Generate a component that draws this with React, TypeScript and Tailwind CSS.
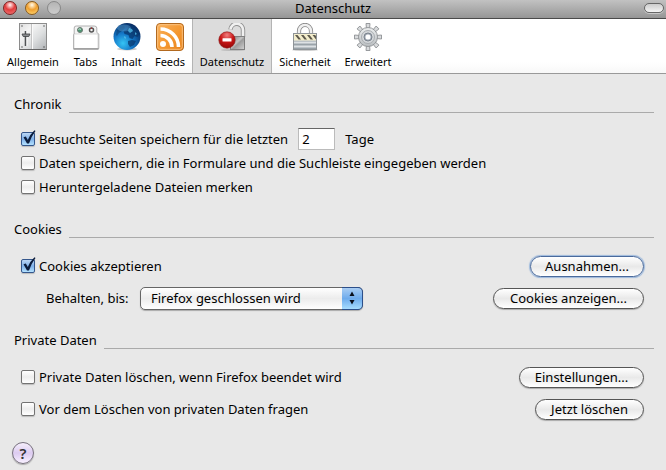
import { useState, type ReactNode } from "react"
import clsx from "clsx"

const AllgemeinIcon = () => (
  <svg width="28" height="28" viewBox="0 0 28 28">
    <defs>
      <linearGradient id="panel" x1="0" y1="0" x2="1" y2="1">
        <stop offset="0" stopColor="#dcdcdc" />
        <stop offset="0.3" stopColor="#f4f4f4" />
        <stop offset="0.6" stopColor="#dddfe0" />
        <stop offset="1" stopColor="#b0b3b6" />
      </linearGradient>
    </defs>
    <rect x="0.5" y="0.5" width="27" height="26" fill="url(#panel)" stroke="#8c8c8c" />
    <path d="M0.5 26.500h27" stroke="#666" />
    <path d="M12.500 1v25" stroke="#c4c4c4" />
    <path d="M13.500 1v25" stroke="#fafafa" />
    <path d="M6.500 8v15" stroke="#4f5254" strokeWidth="1.600" />
    <path d="M8 8v15" stroke="#fff" strokeWidth="0.800" />
    <path d="M3 11h8l-1.200 2.500H4.200z" fill="#8a8d90" stroke="#3e4042" strokeWidth="0.800" />
    <g fill="#444">
      <circle cx="3" cy="3" r="0.700" />
      <circle cx="25" cy="3" r="0.700" />
      <circle cx="3" cy="24" r="0.700" />
      <circle cx="25" cy="24" r="0.700" />
    </g>
  </svg>
)

const TabsIcon = () => (
  <svg width="28" height="28" viewBox="0 0 28 28">
    <path d="M1.500 25.500V12q0-1 .7-1V5q0-2 2-2h18q2.600 0 2.600 2v4.500l2 1.500v14.500z" fill="#f3f3f3" stroke="#b0b0b0" />
    <rect x="2" y="11" width="24" height="14.500" fill="#fff" stroke="#c4c4c4" strokeWidth="0.600" />
    <path d="M1.500 26h25" stroke="#909090" strokeWidth="1.400" />
    <circle cx="8" cy="7" r="2.500" fill="#4d9674" stroke="#6c7a72" />
    <path d="M6.500 6.500q1.500-1.500 2.500 0" stroke="#d6efe1" fill="none" />
    <circle cx="19.500" cy="7" r="2" fill="#f4f4f4" stroke="#555" strokeWidth="1.500" />
    <path d="M19.500 4.500v1.500" stroke="#b03030" />
  </svg>
)

const InhaltIcon = () => (
  <svg width="28" height="28" viewBox="0 0 28 28">
    <defs>
      <radialGradient id="ocean" cx="0.35" cy="0.75" r="0.8">
        <stop offset="0" stopColor="#35c4f4" />
        <stop offset="0.45" stopColor="#1478c8" />
        <stop offset="1" stopColor="#06285e" />
      </radialGradient>
    </defs>
    <ellipse cx="14" cy="26" rx="10" ry="1.500" fill="#c9c9c9" />
    <circle cx="14" cy="13.500" r="13.500" fill="url(#ocean)" />
    <path d="M15 3l4-1 5 4 2.500 5-2 3-3-1-2 3-3-1-1-3-4-1-1-3 3-1 2-2zM15 18l4-1 4 1-2 4-4 2-2-3z" fill="#0a376c" opacity="0.75" />
    <path d="M4 7l3-3 4-1 1 2-3 3-3 2-2 3-1-1z" fill="#0a376c" opacity="0.5" />
    <path d="M16 5l3 1 1 2-3 2-2-2zM22 9l2 2-2 1zM11 13l2 1 0 2-2-1z" fill="#4fb9e6" opacity="0.8" />
    <ellipse cx="11" cy="5" rx="7" ry="3.500" fill="#7fc4ee" opacity="0.3" />
  </svg>
)

const FeedsIcon = () => (
  <svg width="28" height="28" viewBox="0 0 28 28">
    <defs>
      <linearGradient id="feed" x1="0" y1="0" x2="1" y2="1">
        <stop offset="0" stopColor="#f8b260" />
        <stop offset="0.5" stopColor="#f59a34" />
        <stop offset="1" stopColor="#e8821a" />
      </linearGradient>
    </defs>
    <rect x="0.500" y="0.500" width="27" height="27" rx="3.500" fill="url(#feed)" stroke="#b2691f" />
    <rect x="1.700" y="1.700" width="24.600" height="24.600" rx="2.500" fill="none" stroke="#fbc98e" strokeWidth="0.800" />
    <circle cx="7" cy="21" r="3" fill="#fff" />
    <path d="M4.500 12.500a11.500 11.500 0 0 1 11.500 11.500M4.500 6a18 18 0 0 1 18 18" fill="none" stroke="#fff" strokeWidth="3.600" />
  </svg>
)

const DatenschutzIcon = () => (
  <svg width="28" height="28" viewBox="0 0 28 28">
    <defs>
      <linearGradient id="lock" x1="0" y1="0" x2="1" y2="1">
        <stop offset="0" stopColor="#777" />
        <stop offset="0.45" stopColor="#c4c4c4" />
        <stop offset="0.55" stopColor="#9c9c9c" />
        <stop offset="1" stopColor="#d4d4d4" />
      </linearGradient>
      <radialGradient id="stop" cx="0.5" cy="0.2" r="0.8">
        <stop offset="0" stopColor="#f08080" />
        <stop offset="0.5" stopColor="#cb1818" />
        <stop offset="1" stopColor="#960808" />
      </radialGradient>
    </defs>
    <ellipse cx="15" cy="27" rx="12" ry="1" fill="#bdbdbd" />
    <path d="M25 14V7.500a6 6 0 0 0-12.500-1" fill="none" stroke="#8f8f8f" strokeWidth="4.400" />
    <path d="M25 14V7.500a6 6 0 0 0-12.500-1" fill="none" stroke="#f0f0f0" strokeWidth="2.600" />
    <rect x="12.500" y="13.500" width="14" height="13" fill="url(#lock)" stroke="#808080" />
    <circle cx="9" cy="17" r="8.200" fill="url(#stop)" stroke="#8b1717" strokeWidth="0.600" />
    <rect x="4.500" y="15.300" width="9" height="3.200" rx="0.500" fill="#fff" />
  </svg>
)

const SicherheitIcon = () => (
  <svg width="28" height="28" viewBox="0 0 28 28">
    <ellipse cx="14" cy="27" rx="13" ry="0.900" fill="#cfcfcf" />
    <path d="M8 11V8a6 6 0 0 1 12 0v3" fill="none" stroke="#858585" strokeWidth="4.200" />
    <path d="M8 11V8a6 6 0 0 1 12 0v3" fill="none" stroke="#f0f0f0" strokeWidth="2.600" />
    <rect x="2.500" y="10.500" width="23" height="16" fill="#bcc3c8" stroke="#8f9498" />
    <path d="M3 19.500h22M3 23.500h22" stroke="#dde1e4" />
    <path d="M3 21.500h22" stroke="#9aa3a9" />
    <path d="M3 25.500h22" stroke="#9aa3a9" />
    <rect x="3" y="11" width="22" height="6.500" fill="#f3edcb" />
    <path d="M4 12h2.500l3.500 4.500H7.500zM10 12h2.500l3.500 4.500h-2.500zM16 12h2.500l3.500 4.500h-2.500zM21.500 12H24l1 1v3.500z" fill="#5d594c" />
  </svg>
)

const ErweitertIcon = () => (
  <svg width="28" height="28" viewBox="0 0 28 28">
    <defs>
      <linearGradient id="gear" x1="0" y1="0" x2="0" y2="1">
        <stop offset="0" stopColor="#eceeef" />
        <stop offset="1" stopColor="#b9bdc0" />
      </linearGradient>
    </defs>
    <g fill="#d9dbdd" stroke="#8f9295" strokeWidth="0.900">
      {[0, 45, 90, 135, 180, 225, 270, 315].map((angle) => (
        <path key={angle} d="M12.500 6L12 .500h4L15.500 6z" transform={`rotate(${angle} 14 14)`} />
      ))}
      <circle cx="14" cy="14" r="9.500" fill="url(#gear)" />
    </g>
    <circle cx="14" cy="14" r="6.500" fill="#d4d7da" stroke="#aaaeb2" />
    <circle cx="14" cy="14" r="4" fill="#a5adb8" stroke="#7b838d" />
    <circle cx="14" cy="14" r="2.500" fill="#fff" />
  </svg>
)

const tabs = [
  { label: "Allgemein", width: "w-[66px]", icon: <AllgemeinIcon /> },
  { label: "Tabs", width: "w-[39px]", icon: <TabsIcon /> },
  { label: "Inhalt", width: "w-[43px]", icon: <InhaltIcon /> },
  { label: "Feeds", width: "w-[44px]", icon: <FeedsIcon /> },
  { label: "Datenschutz", width: "w-[80px]", icon: <DatenschutzIcon /> },
  { label: "Sicherheit", width: "w-[66px]", icon: <SicherheitIcon /> },
  { label: "Erweitert", width: "w-[60px]", icon: <ErweitertIcon /> },
]

function Section({ title, rowGap, children }: { title: string; rowGap: string; children: ReactNode }) {
  return (
    <section>
      <div className="flex items-end gap-[7px] pr-3 pl-3.5">
        <h2 className="leading-[18px]">{title}</h2>
        <div className="h-px grow bg-[#aaaaaa]" />
      </div>
      <div className={clsx("flex flex-col pr-[22px] pl-[21px]", rowGap)}>{children}</div>
    </section>
  )
}

function Checkbox({ label, defaultChecked }: { label: string; defaultChecked?: boolean }) {
  return (
    <label className="flex items-center gap-1">
      <span className="relative flex">
        <input
          type="checkbox"
          defaultChecked={defaultChecked}
          className="peer size-3.5 appearance-none rounded-[2px] border border-[#737373] bg-linear-to-b from-white via-[#ededed] to-white shadow-[0_1px_1px_#bbbbbb] checked:border-[#35578c] checked:from-[#bcd7f5] checked:via-[#7fb0e8] checked:to-[#b4e2ff]"
        />
        <svg
          className="pointer-events-none absolute -top-0.5 left-0 hidden peer-checked:block"
          width="16"
          height="16"
          viewBox="0 0 16 16"
        >
          <path d="M2.500 7.200l2.300-.7 2 3.500Q9.300 4 13.500.3l1 .7Q10.300 6.500 8 13.500H6z" fill="#0b1c3c" />
        </svg>
      </span>
      {label}
    </label>
  )
}

function PushButton({ width, focused, children }: { width: string; focused?: boolean; children: ReactNode }) {
  return (
    <button
      type="button"
      className={clsx(
        "h-[21px] rounded-full border bg-linear-to-b from-white via-[#e9e9e9] to-white text-center leading-[18px] whitespace-nowrap",
        width,
        focused
          ? "border-[#4a6a9c] shadow-[0_0_1px_1px_#9db9dc]"
          : "border-[#555555] shadow-[0_1px_1px_#aaaaaa]",
      )}
    >
      {children}
    </button>
  )
}

export default function App() {
  const [active, setActive] = useState("Datenschutz")

  return (
    <div className="min-h-screen bg-[#e8e8e8] font-['Noto_Sans','Lucida_Grande',sans-serif] text-[13px] leading-[18px] text-black">
      {/* Title bar */}
      <header className="grid h-[19px] grid-cols-[1fr_auto_1fr] items-center border-b border-[#4a4a4a] bg-linear-to-b from-[#c2c2c2] to-[#969696]">
        <div className="flex gap-2 pb-0.5 pl-[3px]">
          <button
            type="button"
            aria-label="Schließen"
            className="size-3.5 rounded-full border border-[#7c2222] bg-[radial-gradient(circle_at_50%_25%,#ffe0e0_5%,#e23c3c_45%,#f08080_100%)]"
          />
          <button
            type="button"
            aria-label="Minimieren"
            className="size-3.5 rounded-full border border-[#8a5a1c] bg-[radial-gradient(circle_at_50%_25%,#fff2d8_5%,#f0a030_45%,#ffe080_100%)]"
          />
          <button
            type="button"
            aria-label="Zoomen"
            disabled
            className="size-3.5 rounded-full border border-[#888888] bg-linear-to-b from-[#b4b4b4] to-[#cccccc]"
          />
        </div>
        <h1 className="pb-0.5 leading-4">Datenschutz</h1>
        <button
          type="button"
          aria-label="Symbolleiste ein-/ausblenden"
          className="mr-0.5 mb-0.5 h-2.5 w-5 justify-self-end rounded-full border border-[#666666] bg-linear-to-b from-[#cccccc] to-[#f4f4f4] shadow-[0_1px_0_#c8c8c8]"
        />
      </header>

      {/* Toolbar */}
      <nav className="flex h-[55px] border-b border-[#999999] bg-linear-to-b from-white from-80% to-[#f8f8f8]">
        {tabs.map((tab) => (
          <button
            key={tab.label}
            type="button"
            onClick={() => setActive(tab.label)}
            className={clsx(
              "flex shrink-0 flex-col items-center gap-[3px] pt-1 text-[11px] leading-4",
              tab.width,
              active === tab.label && "border-x border-[#b4b4b4] bg-[#dcdcdc]",
            )}
          >
            {tab.icon}
            <span className="whitespace-nowrap">{tab.label}</span>
          </button>
        ))}
      </nav>

      <main className="flex flex-col gap-[22px] pt-[21px]">
        <Section title="Chronik" rowGap="gap-0.5 pt-[15px]">
          <div className="flex h-[22px] items-center">
            <Checkbox label="Besuchte Seiten speichern für die letzten" defaultChecked />
            <input
              type="text"
              aria-label="Anzahl der Tage"
              defaultValue="2"
              className="mx-[10px] h-[22px] w-[37px] border border-[#bbbbbb] border-t-[#666666] bg-white px-[3px]"
            />
            <span>Tage</span>
          </div>
          <div className="flex h-[22px] items-center">
            <Checkbox label="Daten speichern, die in Formulare und die Suchleiste eingegeben werden" />
          </div>
          <div className="flex h-[22px] items-center">
            <Checkbox label="Heruntergeladene Dateien merken" />
          </div>
        </Section>

        <Section title="Cookies" rowGap="gap-2.5 pt-[17px]">
          <div className="flex h-[22px] items-center justify-between">
            <Checkbox label="Cookies akzeptieren" defaultChecked />
            <PushButton width="w-[114px]" focused>
              Ausnahmen...
            </PushButton>
          </div>
          <div className="flex h-[22px] items-center justify-between">
            <div className="flex items-center pl-[25px]">
              <label htmlFor="keep" className="w-[94px]">
                Behalten, bis:
              </label>
              <div className="relative">
                <select
                  id="keep"
                  className="block h-[23px] w-[223px] appearance-none rounded-[5px] border border-[#666666] bg-linear-to-b from-white via-[#ececec] to-white pr-6 pl-2.5 leading-[18px] shadow-[0_1px_1px_#aaaaaa]"
                >
                  <option>Firefox geschlossen wird</option>
                </select>
                <span className="pointer-events-none absolute inset-y-0 right-0 flex w-[21px] items-center justify-center rounded-r-[5px] border border-l-0 border-[#2c4f8a] bg-linear-to-b from-[#a9cdf3] via-[#6eabec] to-[#a6dcff]">
                  <svg width="6" height="14" viewBox="0 0 6 14">
                    <path d="M3 0.500l2.500 4.500h-5zM3 13.500L0.500 9h5z" fill="#0a0f1c" />
                  </svg>
                </span>
              </div>
            </div>
            <PushButton width="w-[151px]">Cookies anzeigen...</PushButton>
          </div>
        </Section>

        <Section title="Private Daten" rowGap="gap-2.5 pt-[17px]">
          <div className="flex h-[22px] items-center justify-between">
            <Checkbox label="Private Daten löschen, wenn Firefox beendet wird" />
            <PushButton width="w-[125px]">Einstellungen...</PushButton>
          </div>
          <div className="flex h-[22px] items-center justify-between">
            <Checkbox label="Vor dem Löschen von privaten Daten fragen" />
            <PushButton width="w-[109px]">Jetzt löschen</PushButton>
          </div>
        </Section>

        <footer className="pl-3">
          <button
            type="button"
            aria-label="Hilfe"
            className="flex size-[22px] items-center justify-center rounded-full border border-[#77717e] bg-linear-to-b from-[#f6effc] via-[#dccbf0] to-[#f8f0ff] text-[15px] font-semibold text-[#333333] shadow-[0_1px_1px_#aaaaaa]"
          >
            ?
          </button>
        </footer>
      </main>
    </div>
  )
}
